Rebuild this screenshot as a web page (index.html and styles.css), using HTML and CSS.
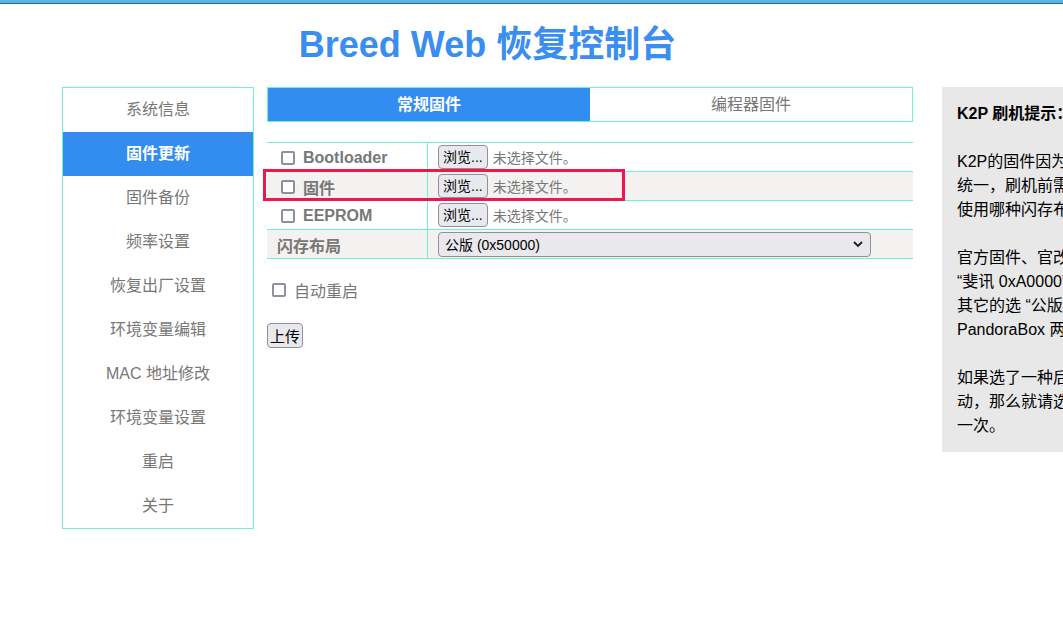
FILE: index.html
```html
<!DOCTYPE html>
<html lang="zh-CN">
<head>
    <meta charset="UTF-8">
    <meta name="viewport" content="width=device-width, initial-scale=1.0">
    <title>Breed Web 恢复控制台</title>
    <link rel="stylesheet" href="styles.css">
</head>
<body>
    <div class="topbar"></div>
    <div class="page">
        <h1 class="title">Breed Web 恢复控制台</h1>
        <div class="layout">
            <ul class="nav">
                <li>系统信息</li>
                <li class="active">固件更新</li>
                <li>固件备份</li>
                <li>频率设置</li>
                <li>恢复出厂设置</li>
                <li>环境变量编辑</li>
                <li>MAC 地址修改</li>
                <li>环境变量设置</li>
                <li>重启</li>
                <li>关于</li>
            </ul>

            <div class="main">
                <div class="tabs">
                    <div class="tab active">常规固件</div>
                    <div class="tab">编程器固件</div>
                </div>

                <div class="fw-table">
                    <div class="row">
                        <div class="cell-label"><span class="check"></span>Bootloader</div>
                        <div class="cell-value"><span class="btn">浏览...</span><span class="nofile">未选择文件。</span></div>
                    </div>
                    <div class="row shade">
                        <div class="cell-label"><span class="check"></span>固件</div>
                        <div class="cell-value"><span class="btn">浏览...</span><span class="nofile">未选择文件。</span></div>
                    </div>
                    <div class="row">
                        <div class="cell-label"><span class="check"></span>EEPROM</div>
                        <div class="cell-value"><span class="btn">浏览...</span><span class="nofile">未选择文件。</span></div>
                    </div>
                    <div class="row shade">
                        <div class="cell-label plain">闪存布局</div>
                        <div class="cell-value">
                            <div class="select">
                                <span>公版 (0x50000)</span>
                                <svg width="12" height="8" viewBox="0 0 12 8"><path d="M2 2 L6 6 L10 2" fill="none" stroke="#1c1c1c" stroke-width="1.8"/></svg>
                            </div>
                        </div>
                    </div>
                    <div class="highlight"></div>
                </div>

                <div class="auto-reboot"><span class="check"></span>自动重启</div>

                <button class="upload">上传</button>
            </div>

            <div class="tips">
                <p><b>K2P 刷机提示：</b></p>
                <p>K2P的固件因为闪存布局不<br>统一，刷机前需要确认固件<br>使用哪种闪存布局。</p>
                <p>官方固件、官改固件请选<br>“斐讯 0xA0000”，<br>其它的选 “公版 0x50000”，<br>PandoraBox 两种都可以。</p>
                <p>如果选了一种后无法启<br>动，那么就请选另一种再刷<br>一次。</p>
            </div>
        </div>
    </div>
</body>
</html>
```

FILE: styles.css
```css
html, body {
    overflow-x: hidden;
}

body {
    margin: 0;
    font-family: "Liberation Sans", "Noto Sans CJK SC", sans-serif;
    font-size: 16px;
    background: #fff;
}

.topbar {
    height: 3px;
    background: #5ab4e0;
    border-bottom: 1px solid #1f6c8c;
}

.page {
    padding-left: 62px;
}

.title {
    width: 851px;
    margin: 20px 0 21px;
    text-align: center;
    font-size: 36px;
    line-height: 42px;
    color: #3a8ef0;
}

.layout {
    display: flex;
    align-items: flex-start;
}

/* left menu */
.nav {
    list-style: none;
    margin: 0;
    padding: 0;
    width: 190px;
    flex: none;
    border: 1px solid #6cf5cc;
}

.nav li {
    height: 44px;
    line-height: 44px;
    text-align: center;
    color: #777;
}

.nav li.active {
    background: #338cf0;
    color: #fff;
    font-weight: bold;
}

/* middle */
.main {
    width: 646px;
    flex: none;
    margin-left: 13px;
}

.tabs {
    display: flex;
    border: 1px solid #6cf5cc;
    height: 33px;
}

.tab {
    flex: 1;
    text-align: center;
    line-height: 33px;
    color: #777;
}

.tab.active {
    background: #338cf0;
    color: #fff;
    font-weight: bold;
}

.fw-table {
    position: relative;
    margin-top: 20px;
    border-top: 1px solid #6cf5cc;
}

.row {
    display: flex;
    height: 28px;
    border-bottom: 1px solid #6cf5cc;
}

.row.shade {
    background: #f3f2f1;
}

.cell-label {
    width: 146px;
    padding: 1px 0 0 14px;
    border-right: 1px solid #6cf5cc;
    display: flex;
    align-items: center;
    font-weight: bold;
    color: #777;
}

.cell-label.plain {
    padding-left: 10px;
    width: 150px;
}

.check {
    display: inline-block;
    width: 10px;
    height: 10px;
    border: 2px solid #8f8f9d;
    border-radius: 2px;
    margin-right: 8px;
    background: #fff;
}

.cell-value {
    flex: 1;
    display: flex;
    align-items: center;
    padding-left: 10px;
}

.btn {
    display: inline-block;
    height: 22px;
    line-height: 22px;
    padding: 0 4px;
    font-size: 14px;
    color: #000;
    background: #e9e9ed;
    border: 1px solid #8f8f9d;
    border-radius: 4px;
}

.nofile {
    margin-left: 5px;
    font-size: 14px;
    color: #777;
}

.select {
    width: 419px;
    height: 23px;
    padding: 0 6px;
    display: flex;
    align-items: center;
    justify-content: space-between;
    font-size: 14px;
    color: #000;
    background: #e9e9ed;
    border: 1px solid #8f8f9d;
    border-radius: 4px;
}

.highlight {
    position: absolute;
    left: -4px;
    top: 26px;
    width: 356px;
    height: 26px;
    border: 3px solid #f0154b;
}

.auto-reboot {
    display: flex;
    align-items: center;
    margin: 19px 0 0 5px;
    height: 24px;
    color: #777;
}

.auto-reboot .check {
    margin-right: 8px;
}

.upload {
    margin-top: 21px;
    height: 25px;
    padding: 0 2px;
    font-family: inherit;
    font-size: 15px;
    color: #000;
    background: #e9e9ed;
    border: 1px solid #8f8f9d;
    border-radius: 4px;
}

/* right hint */
.tips {
    flex: none;
    width: 210px;
    margin-left: 29px;
    padding: 15px 15px 14px;
    background: #e8e8e8;
    line-height: 24px;
    color: #000;
}

.tips p {
    margin: 0 0 24px;
}

.tips p:last-child {
    margin-bottom: 0;
}
```
